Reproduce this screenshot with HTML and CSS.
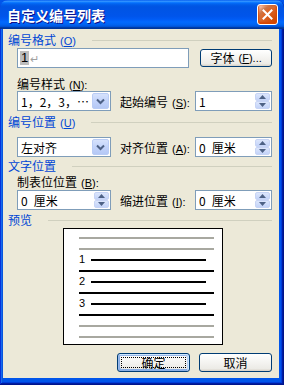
FILE: index.html
```html
<!DOCTYPE html>
<html>
<head>
<meta charset="utf-8">
<link rel="stylesheet" href="styles.css">
</head>
<body>
<div class="window">
  <div class="titlebar">
    <span class="title">自定义编号列表</span>
    <span class="close"><svg width="11" height="11" viewBox="0 0 11 11"><path d="M1.5 1.5 L9.5 9.5 M9.5 1.5 L1.5 9.5" stroke="#fff" stroke-width="2" stroke-linecap="square"/></svg></span>
  </div>
  <div class="client">
    <div class="heading"><span class="htext">编号格式<span class="acc">(<u>O</u>)</span></span><span class="hline"></span></div>
    <div class="row r1">
      <div class="field format"><span class="sel">1</span><span class="ret">↵</span></div>
      <button class="btn font">字体<span class="acc">(<u>F</u>)...</span></button>
    </div>
    <div class="label">编号样式<span class="acc">(<u>N</u>):</span></div>
    <div class="row r2">
      <div class="combo"><span class="ctext">1，2，3，…</span><span class="cbtn"><svg width="9" height="7" viewBox="0 0 9 7"><path d="M1 1.5 L4.5 5 L8 1.5" stroke="#4D6185" stroke-width="2" fill="none"/></svg></span></div>
      <span class="ilabel">起始编号<span class="acc">(<u>S</u>):</span></span>
      <div class="spin"><span class="stext">1</span><span class="sbtns"><span class="sb"><svg width="7" height="4" viewBox="0 0 7 4"><path d="M0 4 L3.5 0 L7 4Z" fill="#4D6185"/></svg></span><span class="sb"><svg width="7" height="4" viewBox="0 0 7 4"><path d="M0 0 L3.5 4 L7 0Z" fill="#4D6185"/></svg></span></span></div>
    </div>
    <div class="heading h2"><span class="htext">编号位置<span class="acc">(<u>U</u>)</span></span><span class="hline"></span></div>
    <div class="row r3">
      <div class="combo"><span class="ctext">左对齐</span><span class="cbtn"><svg width="9" height="7" viewBox="0 0 9 7"><path d="M1 1.5 L4.5 5 L8 1.5" stroke="#4D6185" stroke-width="2" fill="none"/></svg></span></div>
      <span class="ilabel">对齐位置<span class="acc">(<u>A</u>):</span></span>
      <div class="spin"><span class="stext"><span class="num">0</span>厘米</span><span class="sbtns"><span class="sb"><svg width="7" height="4" viewBox="0 0 7 4"><path d="M0 4 L3.5 0 L7 4Z" fill="#4D6185"/></svg></span><span class="sb"><svg width="7" height="4" viewBox="0 0 7 4"><path d="M0 0 L3.5 4 L7 0Z" fill="#4D6185"/></svg></span></span></div>
    </div>
    <div class="heading h3"><span class="htext">文字位置</span><span class="hline"></span></div>
    <div class="label l3">制表位位置<span class="acc">(<u>B</u>):</span></div>
    <div class="row r4">
      <div class="spin left"><span class="stext"><span class="num">0</span>厘米</span><span class="sbtns"><span class="sb"><svg width="7" height="4" viewBox="0 0 7 4"><path d="M0 4 L3.5 0 L7 4Z" fill="#4D6185"/></svg></span><span class="sb"><svg width="7" height="4" viewBox="0 0 7 4"><path d="M0 0 L3.5 4 L7 0Z" fill="#4D6185"/></svg></span></span></div>
      <span class="ilabel">缩进位置<span class="acc">(<u>I</u>):</span></span>
      <div class="spin"><span class="stext"><span class="num">0</span>厘米</span><span class="sbtns"><span class="sb"><svg width="7" height="4" viewBox="0 0 7 4"><path d="M0 4 L3.5 0 L7 4Z" fill="#4D6185"/></svg></span><span class="sb"><svg width="7" height="4" viewBox="0 0 7 4"><path d="M0 0 L3.5 4 L7 0Z" fill="#4D6185"/></svg></span></span></div>
    </div>
    <div class="heading h4"><span class="htext">预览</span><span class="hline"></span></div>
    <div class="preview">
      <div class="prow"><span class="pline gray"></span></div>
      <div class="prow"><span class="pline gray"></span></div>
      <div class="prow"><span class="pnum">1</span><span class="pline short"></span></div>
      <div class="prow"><span class="pline"></span></div>
      <div class="prow"><span class="pnum">2</span><span class="pline short"></span></div>
      <div class="prow"><span class="pline"></span></div>
      <div class="prow"><span class="pnum">3</span><span class="pline short"></span></div>
      <div class="prow"><span class="pline"></span></div>
      <div class="prow"><span class="pline gray"></span></div>
      <div class="prow"><span class="pline gray"></span></div>
    </div>
    <div class="actions">
      <button class="btn action default">确定</button>
      <button class="btn action">取消</button>
    </div>
  </div>
</div>
</body>
</html>
```

FILE: styles.css
```css
* { box-sizing: border-box; }
html, body { margin: 0; padding: 0; }
body {
  width: 284px;
  height: 385px;
  overflow: hidden;
  background: #0055EA;
  font-family: "Noto Sans CJK SC", sans-serif;
  font-size: 12px;
  color: #000;
}
.window {
  width: 284px;
  height: 385px;
  display: flex;
  flex-direction: column;
  background: #0055EA;
  border-radius: 8px 8px 0 0;
  box-shadow: inset -1px -1px #00138c, inset 1px 1px #0831d9, inset -2px -2px #001ea0, inset 2px 2px #166aee, inset -3px -3px #003bda, inset 3px 3px #0855dd;
}
.titlebar {
  height: 29px;
  flex: none;
  display: flex;
  align-items: center;
  padding: 0 6px 0 7px;
  border-radius: 8px 8px 0 0;
  background: linear-gradient(#0058ee 0%, #3593ff 4%, #288eff 6%, #127dff 8%, #036ffc 10%, #0262ee 14%, #0057e5 20%, #0054e3 24%, #0055eb 56%, #005bf5 66%, #026afe 76%, #0062ef 86%, #0052d6 92%, #0040ab 94%, #003092 100%);
}
.title {
  color: #fff;
  font-weight: bold;
  font-size: 14px;
  line-height: 16px;
  text-shadow: 1px 1px #0f1089;
}
.close {
  margin-left: auto;
  width: 21px;
  height: 21px;
  border: 1px solid #fff;
  border-radius: 3px;
  display: flex;
  align-items: center;
  justify-content: center;
  background: radial-gradient(circle at 90% 90%, #cc4600 0%, #dc6527 55%, #cd7546 70%, #ffccb2 90%, #fff 100%);
  box-shadow: inset 0 -1px 2px 1px #da4600;
}
.client {
  flex: 1;
  margin: 0 5px 7px 3px;
  background: #ECE9D8;
  padding: 5px 7px 0 5px;
  display: flex;
  flex-direction: column;
}
.acc {
  font-family: "Liberation Sans", sans-serif;
  font-size: 11px;
  margin-left: 4px;
}
.heading {
  display: flex;
  align-items: center;
  height: 12px;
  line-height: 12px;
  color: #0046D5;
}
.hline {
  flex: 1;
  height: 1px;
  background: #D0D0BF;
  margin-left: 16px;
}
.h2 { margin-top: 5px; }
.h3 { margin-top: 3px; }
.h4 { margin-top: 4px; }
.row {
  display: flex;
  align-items: center;
  height: 20px;
  margin-left: 9px;
}
.r1 { margin-top: 2px; }
.r2 { margin-top: 1px; }
.r3 { margin-top: 9px; }
.r4 { margin-top: 2px; }
.label {
  margin-left: 9px;
  margin-top: 10px;
  height: 12px;
  line-height: 12px;
}
.l3 { margin-top: 4px; }
.field, .combo, .spin {
  height: 20px;
  border: 1px solid #7F9DB9;
  background: #fff;
  display: flex;
  align-items: center;
}
.format { width: 173px; padding-left: 2px; }
.sel {
  background: #BDBDBD;
  line-height: 14px;
  padding: 0 1px;
  font-family: "Liberation Sans", sans-serif;
  font-size: 13px;
}
.ret { color: #A0A0A0; font-size: 11px; margin-left: 1px; }
.btn {
  font-family: "Noto Sans CJK SC", sans-serif;
  font-size: 12px;
  color: #000;
  border: 1px solid #003C74;
  border-radius: 3px;
  background: linear-gradient(180deg, #fff 0%, #ECEBE6 86%, #D6D0C5 100%);
  padding: 0;
  display: flex;
  align-items: center;
  justify-content: center;
  line-height: 12px;
  position: relative;
}
.font { margin-left: 11px; width: 72px; height: 18px; }
.combo { width: 94px; padding: 0 1px 0 3px; }
.ctext { flex: 1; white-space: nowrap; }
.cbtn {
  width: 17px;
  height: 16px;
  border-radius: 2px;
  border: 1px solid #B9CCF5;
  background: linear-gradient(180deg, #D6E2FC 0%, #C2D3FA 50%, #B5C8F5 100%);
  display: flex;
  align-items: center;
  justify-content: center;
}
.ilabel { margin-left: 9px; width: 75px; white-space: nowrap; }
.spin { width: 77px; padding: 0 1px 0 3px; }
.spin.left { width: 94px; }
.stext { flex: 1; white-space: nowrap; }
.num { margin-right: 6px; }
.sbtns {
  width: 15px;
  height: 16px;
  display: flex;
  flex-direction: column;
}
.sb {
  flex: 1;
  display: flex;
  align-items: center;
  justify-content: center;
  border: 1px solid #C7D4F5;
  border-radius: 2px;
  background: linear-gradient(180deg, #DCE6FC 0%, #C3D3F8 100%);
}
.preview {
  margin-top: 2px;
  margin-left: 55px;
  width: 160px;
  height: 117px;
  border: 1px solid #000;
  background: #fff;
  padding: 3px 0 0 15px;
  display: flex;
  flex-direction: column;
}
.prow {
  height: 11px;
  display: flex;
  align-items: center;
}
.pline { width: 135px; height: 2px; background: #000; }
.pline.gray { background: #A8A8A0; }
.pline.short { width: 115px; }
.pnum {
  width: 12px;
  font-family: "Liberation Sans", sans-serif;
  font-size: 11px;
  line-height: 11px;
}
.actions {
  margin-top: 8px;
  display: flex;
  justify-content: flex-end;
  gap: 9px;
}
.action { width: 73px; height: 19px; }
.default {
  box-shadow: inset -1px 1px #CEE7FF, inset 1px 2px #98B8EA, inset -2px 2px #BCD4F6, inset 1px -1px #89ADE4, inset 2px -2px #89ADE4;
}
.default::after {
  content: "";
  position: absolute;
  inset: 3px;
  border: 1px dotted #000;
}
```
